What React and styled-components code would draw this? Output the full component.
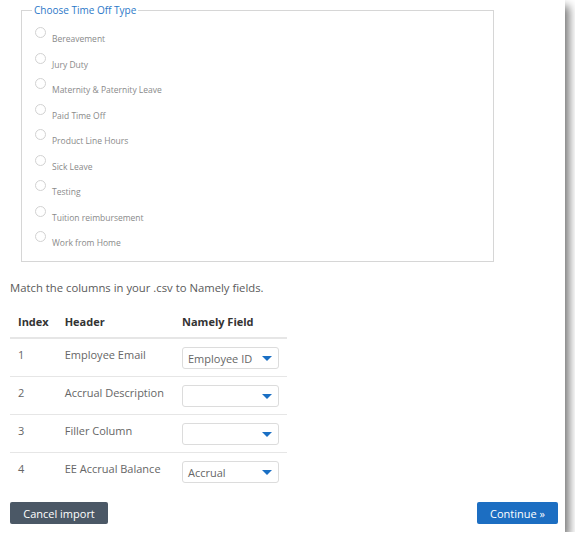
import React from "react";
import styled, { createGlobalStyle } from "styled-components";

const Global = createGlobalStyle`
  html, body { margin: 0; padding: 0; background: #fff; }
  body { font-family: "Open Sans", "Liberation Sans", sans-serif; }
  * { box-sizing: border-box; }
`;

const Card = styled.div`
  width: 565px;
  height: 532px;
  background: #fff;
  box-shadow: 4px 6px 9px rgba(0, 0, 0, 0.55);
  display: flex;
  flex-direction: column;
`;

const Fieldset = styled.fieldset`
  margin: 4px 0 0 21px;
  width: 473px;
  height: 258px;
  border: 1px solid #d6d6d6;
  padding: 11px 10px 0 10px;
  min-width: 0;
`;

const Legend = styled.legend`
  font-size: 10px;
  line-height: 12px;
  color: #2c78c8;
  padding: 0 2px;
`;

const Options = styled.div`
  display: flex;
  flex-direction: column;
`;

const Option = styled.label`
  display: flex;
  align-items: flex-start;
  height: 25.5px;
  padding-left: 3px;
`;

const Radio = styled.span`
  width: 11px;
  height: 11px;
  border-radius: 50%;
  border: 1px solid #d2d2d2;
  background: #fff;
  flex: none;
`;

const OptionText = styled.span`
  margin: 6px 0 0 6px;
  font-size: 8.5px;
  line-height: 12px;
  color: #8a8a8a;
`;

const Intro = styled.p`
  margin: 19px 0 0 10px;
  font-size: 11.3px;
  line-height: 14px;
  color: #5a5a5a;
`;

const Table = styled.table`
  margin: 10px 0 0 10px;
  width: 277px;
  border-collapse: collapse;
  font-size: 11px;
  line-height: 13px;
`;

const Th = styled.th`
  text-align: left;
  font-weight: 700;
  color: #333;
  padding: 10px 8px 9px 8px;
  width: ${(p) => p.w}px;
  border-bottom: 2px solid #e6e6e6;
`;

const Tr = styled.tr`
  border-bottom: ${(p) => (p.last ? "none" : "1px solid #e6e6e6")};
`;

const Td = styled.td`
  vertical-align: top;
  color: #666;
  padding: ${(p) => (p.select ? "8px 8px 7px 8px" : "9px 8px 0 8px")};
`;

const Select = styled.div`
  width: 97px;
  height: 22px;
  border: 1px solid #dcdcdc;
  border-radius: 3px;
  display: flex;
  align-items: center;
  justify-content: space-between;
  padding: 0 6px 0 5px;
  color: #666;
  font-size: 11px;
`;

const Caret = styled.span`
  width: 0;
  height: 0;
  border-left: 5px solid transparent;
  border-right: 5px solid transparent;
  border-top: 5px solid #1a6fc4;
  margin-top: 1px;
`;

const Actions = styled.div`
  margin-top: auto;
  padding: 0 7px 8px 10px;
  display: flex;
  justify-content: space-between;
`;

const Button = styled.button`
  height: 22px;
  width: ${(p) => p.w}px;
  border: none;
  border-radius: 2px;
  background: ${(p) => (p.primary ? "#1c6ec2" : "#4b5866")};
  color: #fff;
  font-family: inherit;
  font-size: 11px;
  padding: 0;
`;

const types = [
  "Bereavement",
  "Jury Duty",
  "Maternity & Paternity Leave",
  "Paid Time Off",
  "Product Line Hours",
  "Sick Leave",
  "Testing",
  "Tuition reimbursement",
  "Work from Home",
];

const rows = [
  ["1", "Employee Email", "Employee ID"],
  ["2", "Accrual Description", ""],
  ["3", "Filler Column", ""],
  ["4", "EE Accrual Balance", "Accrual"],
];

export default function App() {
  return (
    <>
      <Global />
      <Card>
        <Fieldset>
          <Legend>Choose Time Off Type</Legend>
          <Options>
            {types.map((t) => (
              <Option key={t}>
                <Radio />
                <OptionText>{t}</OptionText>
              </Option>
            ))}
          </Options>
        </Fieldset>
        <Intro>Match the columns in your .csv to Namely fields.</Intro>
        <Table>
          <thead>
            <tr>
              <Th w={45}>Index</Th>
              <Th w={120}>Header</Th>
              <Th w={112}>Namely Field</Th>
            </tr>
          </thead>
          <tbody>
            {rows.map((r, i) => (
              <Tr key={r[0]} last={i === rows.length - 1}>
                <Td>{r[0]}</Td>
                <Td>{r[1]}</Td>
                <Td select>
                  <Select>
                    <span>{r[2]}</span>
                    <Caret />
                  </Select>
                </Td>
              </Tr>
            ))}
          </tbody>
        </Table>
        <Actions>
          <Button w={98}>Cancel import</Button>
          <Button w={81} primary>
            Continue »
          </Button>
        </Actions>
      </Card>
    </>
  );
}
